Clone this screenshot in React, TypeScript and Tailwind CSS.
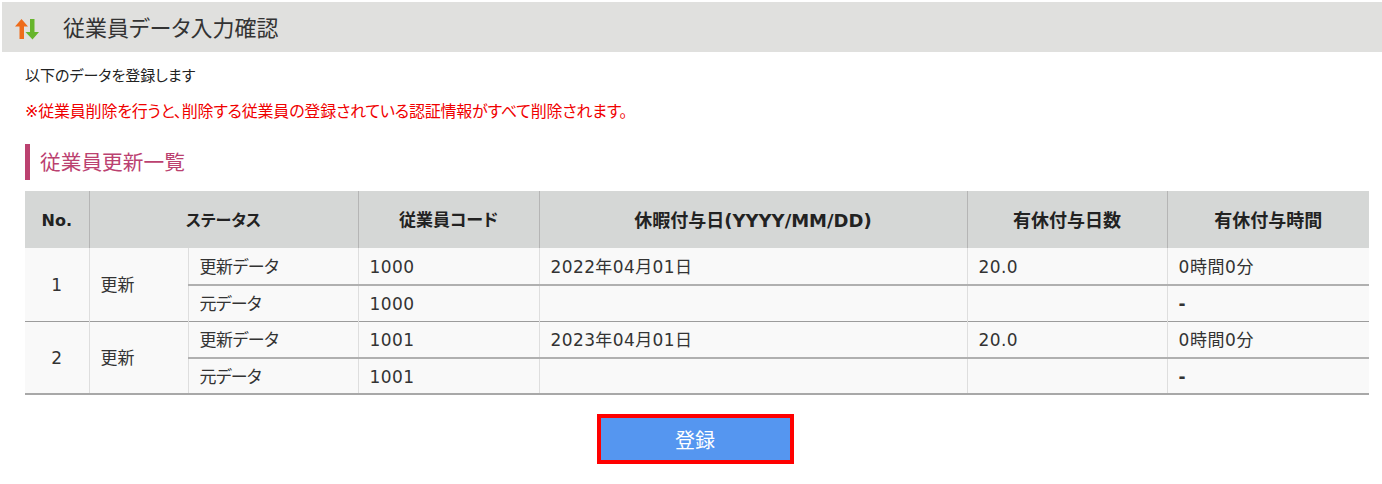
const FONT = 'font-["DejaVu_Sans","Noto_Sans_CJK_JP",sans-serif] [font-feature-settings:"palt"]';

const HEADERS = [
  { label: '従業員コード', size: 'text-[17px]' },
  { label: '休暇付与日(YYYY/MM/DD)', size: 'text-[18px]' },
  { label: '有休付与日数', size: 'text-[18px]' },
  { label: '有休付与時間', size: 'text-[18px]' },
];

const RECORDS = [
  { no: 1, code: '1000', date: '2022年04月01日', days: '20.0', time: '0時間0分' },
  { no: 2, code: '1001', date: '2023年04月01日', days: '20.0', time: '0時間0分' },
];

const th = 'bg-[#d5d7d6] border-l border-[#b5b5b5] first:border-l-0 text-center font-bold text-[#222] p-0 pt-[2px]';
const td = 'border-l border-[#dedede] px-[11px] py-0 pt-[3px] text-[17px] text-[#333] text-left';
const subTd = `${td} border-t-2 border-t-[#b0b0b0]`;

function SortIcon() {
  return (
    <svg width="26" height="22" viewBox="0 0 26 22" className="shrink-0 mt-[6px]">
      <path d="M6.5 0 L13 7.5 L9 7.5 L9 20 L4.5 20 L4.5 7.5 L0 7.5 Z" fill="#ee6c1a" />
      <path d="M15 0 L19.5 0 L19.5 13 L24 13 L17.5 20.5 L10.5 13 L15 13 Z" fill="#67b52c" />
    </svg>
  );
}

export default function App() {
  return (
    <div className={`${FONT} bg-white h-[484px] pt-[2px] pl-[2px] overflow-hidden`}>
      <div className="h-[50px] bg-[#e0e0de] flex items-center pl-[13px] gap-[22px]">
        <SortIcon />
        <h1 className="text-[22px] pt-[3px] font-normal text-[#333] leading-none">従業員データ入力確認</h1>
      </div>

      <div className="pl-[23px] pr-[11px]">
        <p className="mt-[14px] text-[15px] leading-[20px] text-[#222]">以下のデータを登録します</p>
        <p className="mt-[16px] text-[16px] tracking-[-0.2px] leading-[20px] text-[#f00000]">
          ※従業員削除を行うと、削除する従業員の登録されている認証情報がすべて削除されます。
        </p>

        <h2 className="mt-[22px] h-[36px] border-l-[5px] border-[#bb4170] pl-[10px] text-[20.7px] leading-[38px] font-normal text-[#bb4170]">
          従業員更新一覧
        </h2>

        <table className="mt-[11px] w-[1344px] table-fixed border-collapse bg-[#f9f9f9] border-b-2 border-[#a8a8a8]">
          <colgroup>
            <col className="w-[64px]" />
            <col className="w-[99px]" />
            <col className="w-[170px]" />
            <col className="w-[181px]" />
            <col className="w-[428px]" />
            <col className="w-[200px]" />
            <col className="w-[202px]" />
          </colgroup>
          <thead>
            <tr className="h-[57px]">
              <th className={`${th} text-[16px]`}>No.</th>
              <th className={`${th} text-[16px]`} colSpan={2}>ステータス</th>
              {HEADERS.map(h => <th key={h.label} className={`${th} ${h.size}`}>{h.label}</th>)}
            </tr>
          </thead>
          <tbody>
            {RECORDS.map(r => [
              <tr key={`${r.no}-new`} className="h-[37px] border-t border-[#9c9c9c] first:border-t-0">
                <td rowSpan={2} className="p-0 pt-[3px] text-center text-[17px] text-[#333]">{r.no}</td>
                <td rowSpan={2} className={td}>更新</td>
                <td className={`${td} tracking-[-0.5px]`}>更新データ</td>
                <td className={`${td} tracking-[0.4px]`}>{r.code}</td>
                <td className={`${td} tracking-[0.4px]`}>{r.date}</td>
                <td className={`${td} tracking-[0.4px]`}>{r.days}</td>
                <td className={`${td} tracking-[0.6px]`}>{r.time}</td>
              </tr>,
              <tr key={`${r.no}-old`} className="h-[36px]">
                <td className={`${subTd} tracking-[-0.8px]`}>元データ</td>
                <td className={`${subTd} tracking-[0.4px]`}>{r.code}</td>
                <td className={subTd}></td>
                <td className={subTd}></td>
                <td className={`${subTd} font-bold`}>-</td>
              </tr>,
            ])}
          </tbody>
        </table>

        <div className="mt-[19px] flex justify-center">
          <button className="w-[197px] h-[50px] mr-[6px] pt-[4px] border-4 border-[#ff0000] bg-[#5596f0] text-white text-[20px]">
            登録
          </button>
        </div>
      </div>
    </div>
  );
}
